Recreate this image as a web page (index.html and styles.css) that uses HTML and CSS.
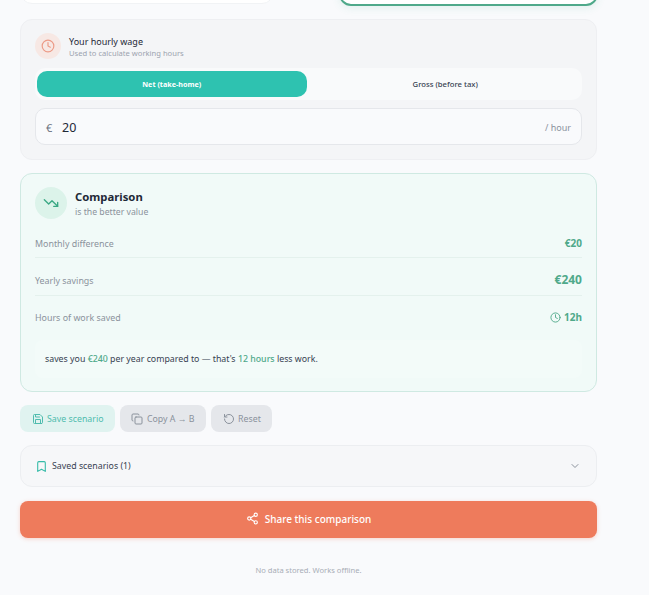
FILE: index.html
```html
<!DOCTYPE html>
<html lang="en">

<head>
  <meta charset="UTF-8">
  <meta name="viewport" content="width=device-width, initial-scale=1.0">
  <title>Comparison</title>
  <link rel="stylesheet" href="styles.css">
</head>

<body>
  <div class="container">
    <!-- Scenario cards, scrolled mostly out of view -->
    <div class="scenario-row">
      <div class="scenario-card"></div>
      <div class="scenario-card scenario-best"></div>
    </div>

    <!-- Hourly wage -->
    <section class="wage-card">
      <div class="wage-head">
        <span class="wage-icon">
          <svg width="14" height="14" viewBox="0 0 24 24" fill="none" stroke="currentColor" stroke-width="2" stroke-linecap="round" stroke-linejoin="round">
            <circle cx="12" cy="12" r="10"></circle>
            <path d="M12 6v6l4 2"></path>
          </svg>
        </span>
        <div>
          <div class="wage-title">Your hourly wage</div>
          <div class="wage-sub">Used to calculate working hours</div>
        </div>
      </div>
      <div class="toggle">
        <div class="toggle-btn toggle-active">Net (take-home)</div>
        <div class="toggle-btn">Gross (before tax)</div>
      </div>
      <div class="wage-input">
        <span class="currency">€</span>
        <span class="amount">20</span>
        <span class="unit">/ hour</span>
      </div>
    </section>

    <!-- Result -->
    <section class="result-card">
      <div class="result-head">
        <span class="result-icon">
          <svg width="16" height="16" viewBox="0 0 24 24" fill="none" stroke="currentColor" stroke-width="2" stroke-linecap="round" stroke-linejoin="round">
            <path d="M22 17l-8.5-8.5-5 5L2 7"></path>
            <path d="M16 17h6v-6"></path>
          </svg>
        </span>
        <div>
          <div class="result-title">Comparison</div>
          <div class="result-sub">is the better value</div>
        </div>
      </div>
      <div class="stat-row">
        <span class="stat-label">Monthly difference</span>
        <span class="stat-value">€20</span>
      </div>
      <div class="stat-row">
        <span class="stat-label">Yearly savings</span>
        <span class="stat-value stat-big">€240</span>
      </div>
      <div class="stat-row stat-last">
        <span class="stat-label">Hours of work saved</span>
        <span class="stat-value">
          <svg width="11" height="11" viewBox="0 0 24 24" fill="none" stroke="currentColor" stroke-width="2" stroke-linecap="round" stroke-linejoin="round">
            <circle cx="12" cy="12" r="10"></circle>
            <path d="M12 6v6l4 2"></path>
          </svg>
          12h
        </span>
      </div>
      <p class="note">saves you <b>€240</b> per year compared to — that's <b>12 hours</b> less work.</p>
    </section>

    <!-- Actions -->
    <div class="actions">
      <button class="action-btn action-save">
        <svg width="12" height="12" viewBox="0 0 24 24" fill="none" stroke="currentColor" stroke-width="2" stroke-linecap="round" stroke-linejoin="round">
          <path d="M19 21H5a2 2 0 0 1-2-2V5a2 2 0 0 1 2-2h11l5 5v11a2 2 0 0 1-2 2z"></path>
          <path d="M17 21v-8H7v8"></path>
          <path d="M7 3v5h8"></path>
        </svg>
        Save scenario
      </button>
      <button class="action-btn">
        <svg width="12" height="12" viewBox="0 0 24 24" fill="none" stroke="currentColor" stroke-width="2" stroke-linecap="round" stroke-linejoin="round">
          <rect x="8" y="8" width="14" height="14" rx="2"></rect>
          <path d="M4 16c-1.1 0-2-.9-2-2V4c0-1.1.9-2 2-2h10c1.1 0 2 .9 2 2"></path>
        </svg>
        Copy A → B
      </button>
      <button class="action-btn">
        <svg width="12" height="12" viewBox="0 0 24 24" fill="none" stroke="currentColor" stroke-width="2" stroke-linecap="round" stroke-linejoin="round">
          <path d="M3 12a9 9 0 1 0 9-9 9.75 9.75 0 0 0-6.74 2.74L3 8"></path>
          <path d="M3 3v5h5"></path>
        </svg>
        Reset
      </button>
    </div>

    <!-- Saved scenarios -->
    <div class="saved-bar">
      <svg class="saved-icon" width="13" height="13" viewBox="0 0 24 24" fill="none" stroke="currentColor" stroke-width="2" stroke-linecap="round" stroke-linejoin="round">
        <path d="M19 21l-7-4-7 4V5a2 2 0 0 1 2-2h10a2 2 0 0 1 2 2z"></path>
      </svg>
      <span class="saved-label">Saved scenarios (1)</span>
      <svg class="saved-chevron" width="12" height="12" viewBox="0 0 24 24" fill="none" stroke="currentColor" stroke-width="2" stroke-linecap="round" stroke-linejoin="round">
        <path d="M6 9l6 6 6-6"></path>
      </svg>
    </div>

    <button class="share-btn">
      <svg width="13" height="13" viewBox="0 0 24 24" fill="none" stroke="currentColor" stroke-width="2" stroke-linecap="round" stroke-linejoin="round">
        <circle cx="18" cy="5" r="3"></circle>
        <circle cx="6" cy="12" r="3"></circle>
        <circle cx="18" cy="19" r="3"></circle>
        <path d="M8.59 13.51l6.83 3.98"></path>
        <path d="M15.41 6.51l-6.82 3.98"></path>
      </svg>
      Share this comparison
    </button>

    <p class="footer">No data stored. Works offline.</p>
  </div>
</body>

</html>
```

FILE: styles.css
```css
html,
body {
  height: 100%;
  overflow: hidden;
}

body {
  font-family: "Noto Sans", sans-serif;
  margin: 0;
  background: #f9fafc;
  color: #1f2937;
}

.container {
  width: 577px;
  margin-left: 20px;
  margin-top: -60px;
}

.scenario-row {
  display: flex;
  justify-content: space-between;
  height: 66px;
  margin-bottom: 13px;
}

.scenario-card {
  width: 254px;
  height: 64px;
  background: #fff;
  border: 1px solid #f1f3f5;
  border-radius: 12px;
  box-sizing: border-box;
}

.scenario-best {
  width: 259px;
  height: 66px;
  margin-right: -1px;
  border: 2px solid #4fa98a;
  box-shadow: 0 2px 8px rgba(60, 170, 130, 0.12);
}

.wage-card {
  background: #f4f5f7;
  border: 1px solid #eeeff2;
  border-radius: 12px;
  padding: 13px 14px 14px;
  height: 141px;
  box-sizing: border-box;
}

.wage-head {
  display: flex;
  align-items: center;
  gap: 8px;
  height: 26px;
  margin-bottom: 9px;
}

.wage-icon {
  display: flex;
  align-items: center;
  justify-content: center;
  width: 26px;
  height: 26px;
  border-radius: 50%;
  background: #f7e8e4;
  color: #ec9b87;
}

.wage-title {
  font-size: 9px;
  line-height: 13px;
  padding-top: 1px;
  color: #1f2937;
}

.wage-sub {
  font-size: 7.6px;
  line-height: 10px;
  color: #9ca3af;
}

.toggle {
  display: flex;
  gap: 4px;
  padding: 3px 2px;
  background: #f9fafb;
  border-radius: 10px;
  margin-bottom: 8px;
}

.toggle-btn {
  flex: 1;
  height: 26px;
  line-height: 26px;
  text-align: center;
  font-size: 7.7px;
  font-weight: 500;
  color: #374151;
  border-radius: 10px;
}

.toggle-active {
  background: #2ec2b0;
  color: #fff;
  font-size: 7.2px;
  font-weight: 700;
}

.wage-input {
  display: flex;
  align-items: center;
  height: 37px;
  padding: 2px 10px 0;
  box-sizing: border-box;
  background: #f9fafc;
  border: 1px solid #e5e7eb;
  border-radius: 10px;
}

.currency {
  font-size: 11px;
  color: #6b7280;
  width: 16px;
}

.amount {
  font-size: 12.5px;
  color: #1f2937;
}

.unit {
  margin-left: auto;
  font-size: 9px;
  color: #8b929c;
}

.result-card {
  margin-top: 13px;
  height: 219px;
  box-sizing: border-box;
  padding: 13px 14px 0;
  background: #f1faf8;
  border: 1px solid #cfe9e2;
  border-radius: 12px;
}

.result-head {
  display: flex;
  align-items: center;
  gap: 8px;
  height: 32px;
  margin-bottom: 17px;
}

.result-icon {
  display: flex;
  align-items: center;
  justify-content: center;
  width: 32px;
  height: 32px;
  border-radius: 50%;
  background: #dcf3ea;
  color: #3aa884;
}

.result-title {
  font-size: 11.3px;
  font-weight: 700;
  line-height: 16px;
  padding-top: 2px;
  color: #1f2937;
}

.result-sub {
  font-size: 8.7px;
  line-height: 15px;
  color: #8b929c;
}

.stat-row {
  display: flex;
  justify-content: space-between;
  align-items: center;
  padding-bottom: 7px;
  margin-bottom: 14px;
  border-bottom: 1px solid #e4f1ed;
}

.stat-last {
  border-bottom: none;
  margin-bottom: 9px;
}

.stat-label {
  font-size: 8.9px;
  line-height: 13px;
  padding-top: 1px;
  color: #8b929c;
}

.stat-value {
  display: flex;
  align-items: center;
  gap: 3px;
  font-size: 10px;
  line-height: 14px;
  font-weight: 700;
  color: #4fa98a;
}

.stat-big {
  font-size: 12px;
  line-height: 16px;
}

.note {
  margin: 0;
  height: 38px;
  line-height: 38px;
  padding: 0 10px;
  font-size: 8.8px;
  color: #374151;
  background: #f3fbf9;
  border-radius: 8px;
}

.note b {
  font-weight: 500;
  color: #4fa98a;
}

.actions {
  display: flex;
  gap: 5px;
  margin-top: 13px;
}

.action-btn {
  display: flex;
  align-items: center;
  gap: 3.5px;
  height: 27px;
  padding: 0 11.5px;
  border: none;
  border-radius: 8px;
  font-family: inherit;
  font-size: 8.8px;
  background: #e5e7eb;
  color: #8b929c;
}

.action-save {
  background: #e0f3f0;
  color: #4fbcae;
}

.saved-bar {
  display: flex;
  align-items: center;
  gap: 4px;
  margin-top: 13px;
  height: 42px;
  padding: 0 15px 0 14px;
  box-sizing: border-box;
  background: #f6f7f9;
  border: 1px solid #eceef1;
  border-radius: 12px;
}

.saved-icon {
  color: #35bba8;
}

.saved-label {
  font-size: 8.8px;
  color: #374151;
}

.saved-chevron {
  margin-left: auto;
  color: #8b929c;
}

.share-btn {
  display: flex;
  align-items: center;
  justify-content: center;
  gap: 6px;
  width: 100%;
  height: 37px;
  padding: 0 0 2px;
  margin-top: 14px;
  border: none;
  border-radius: 8px;
  background: #ee7b5c;
  color: #fff;
  font-family: inherit;
  font-size: 10px;
  font-weight: 500;
  box-shadow: 0 1px 4px rgba(238, 123, 92, 0.3);
}

.footer {
  margin: 27px 0 0;
  text-align: center;
  font-size: 7.6px;
  color: #a8adb6;
}
```
